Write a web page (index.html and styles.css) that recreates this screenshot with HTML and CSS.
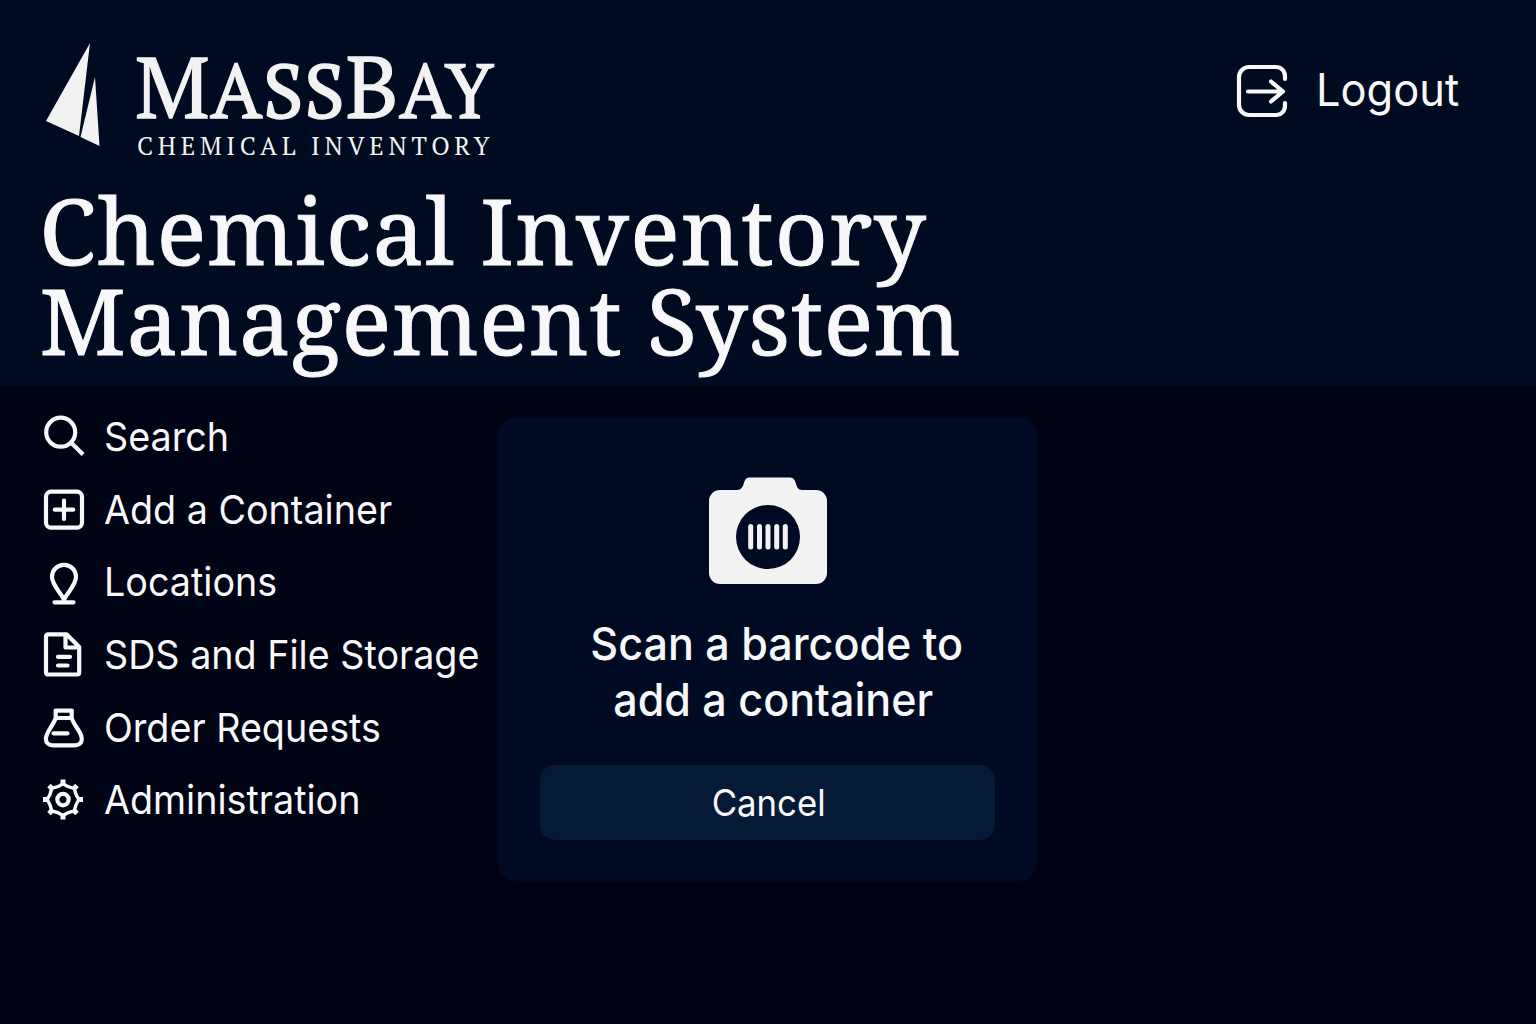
FILE: index.html
```html
<!DOCTYPE html>
<html lang="en">
<head>
<meta charset="utf-8">
<title>Chemical Inventory Management System</title>
<link rel="stylesheet" href="styles.css">
</head>
<body>
<header class="header">
  <div class="topbar">
    <div class="brand">
      <svg class="sails" viewBox="0 0 56 106"><path d="M46 1 2 79l33 15zM51 35 36.500 95l19 9z"/></svg>
      <div class="brand-text">
        <div class="wordmark"><span class="fit">M<small>ASS</small>B<small>AY</small></span></div>
        <div class="tagline"><span class="fit">CHEMICAL INVENTORY</span></div>
      </div>
    </div>
    <a class="logout">
      <svg class="line-icon logout-icon" viewBox="0 0 54 58"><path d="M50 17v-3a9 9 0 0 0-9-9H14a10 10 0 0 0-10 10v28a10 10 0 0 0 10 10h27a9 9 0 0 0 9-9v-3M13 29.500h34M36 19.500l12 10-12 10"/></svg>
      <span class="fit">Logout</span>
    </a>
  </div>
  <h1 class="title"><span class="fit line-one">Chemical Inventory</span><span class="fit line-two">Management System</span></h1>
</header>
<main class="main">
  <nav class="menu">
    <a class="item"><svg class="line-icon" viewBox="0 0 44 52"><circle cx="18.700" cy="21.200" r="14.500"/><path d="M30 32.500 41 43.500" stroke-linecap="butt"/></svg><span class="fit">Search</span></a>
    <a class="item"><svg class="line-icon" viewBox="0 0 44 52"><rect x="4" y="8.700" width="36" height="36" rx="5"/><path d="M22 17.500v18.400M12.800 26.700h18.400"/></svg><span class="fit">Add a Container</span></a>
    <a class="item"><svg class="line-icon" viewBox="0 0 44 52"><path d="M22 43.500C18 35.500 10 29 10 20.800a12 12 0 0 1 24 0C34 29 26 35.500 22 43.500ZM12.500 46.300h19"/></svg><span class="fit">Locations</span></a>
    <a class="item"><svg class="line-icon" viewBox="0 0 44 52"><path d="M6 6.300h18.500L37.200 19v25.500a2 2 0 0 1-2 2H6a2 2 0 0 1-2-2v-36.200a2 2 0 0 1 2-2ZM23.500 7v12.500H37M16 28.800h12M16 37.500h9.500"/></svg><span class="fit">SDS and File Storage</span></a>
    <a class="item"><svg class="line-icon" viewBox="0 0 44 52"><path d="M13.500 9.700h16.400M13.700 9.700V17C11 25 3.900 31 3.900 38c0 4 3 6.300 7 6.300h21.900c4 0 7-2.300 7-6.300C39.800 31 32 25 29.700 17V9.700M14 17h15.500M11.500 32.300h14"/></svg><span class="fit">Order Requests</span></a>
    <a class="item"><svg class="line-icon" viewBox="0 0 44 52"><g transform="translate(21 25.600)"><path class="ring" d="M0-15.800 Q4.900-12.400 11.200-11.200 Q12.400-4.900 15.800 0 Q12.400 4.900 11.200 11.200 Q4.900 12.400 0 15.800 Q-4.900 12.400-11.200 11.200 Q-12.400 4.900-15.800 0 Q-12.400-4.900-11.200-11.200 Q-4.900-12.400 0-15.800Z"/><circle r="5.700"/><path class="teeth" d="M0-15v-5M0 15v5M-15 0h-5M15 0h5M-11-11l-3-3M11-11l3-3M-11 11l-3 3M11 11l3 3"/></g></svg><span class="fit">Administration</span></a>
  </nav>
  <section class="card">
    <svg class="camera" viewBox="0 0 120 108">
      <path class="camera-body" d="M12 13h17c9 0 5-12.500 12-12.500h41c8 0 4 12.500 12 12.500h14a11 11 0 0 1 11 11v72a11 11 0 0 1-11 11H12a11 11 0 0 1-11-11V24a11 11 0 0 1 11-11Z"/>
      <circle class="lens" cx="60" cy="60" r="32"/>
      <path class="bars" d="M42.700 49.500v20.500M51.500 49.500v20.500M60 49.500v20.500M68.700 49.500v20.500M77.300 49.500v20.500"/>
    </svg>
    <p class="prompt"><span class="fit prompt-one">Scan a barcode to</span><span class="fit prompt-two">add a container</span></p>
    <button class="cancel"><span class="fit">Cancel</span></button>
  </section>
</main>
</body>
</html>
```
FILE: styles.css
```css
* { box-sizing: border-box; }
body {
  margin: 0;
  min-height: 1024px;
  background: #000314;
  color: #f8f8fa;
  font-family: Inter, "Liberation Sans", sans-serif;
}
.fit { display: inline-block; white-space: nowrap; transform-origin: left; }

.header { height: 386px; padding-top: 42px; background: #000a20; }
.topbar { display: flex; justify-content: space-between; height: 142.500px; padding: 0 77px 0 44px; }
.brand { display: flex; gap: 35px; }
.sails { width: 56px; height: 106px; fill: #f2f2f2; }
.brand-text { font-family: "PT Serif", "Noto Serif", "Liberation Serif", serif; color: #f2f2f2; padding-top: 4px; }
.wordmark { width: 360px; height: 84px; font-size: 86px; line-height: 80px; letter-spacing: 0.900px; -webkit-text-stroke: 1.400px; }
.wordmark small { font-size: 75.500px; }
.tagline { padding-left: 2px; font-size: 25px; line-height: 32px; letter-spacing: 4.700px; }

.logout { display: flex; gap: 27px; height: 98px; align-items: center; font-size: 45px; }
.logout-icon { width: 54px; height: 58px; }
.logout .fit { width: 143px; margin-top: -3px; transform: scaleX(0.965); }

.title {
  display: flex;
  flex-direction: column;
  align-items: flex-start;
  margin: 0;
  padding-left: 39.500px;
  font: 400 92px/90px "Noto Serif", "PT Serif", "Liberation Serif", serif;
  -webkit-text-stroke: 1px;
}
.line-one { letter-spacing: 1.200px; }
.line-two { letter-spacing: 0.700px; }

.line-icon { fill: none; stroke: currentColor; stroke-width: 4.200; stroke-linecap: round; stroke-linejoin: round; flex: none; }
.ring { stroke-width: 3.400; }
.teeth { stroke-width: 5; stroke-linecap: butt; }

.main { display: flex; align-items: flex-start; padding-left: 42px; }
.menu { width: 456px; padding-top: 14.400px; font-size: 40px; }
.item { display: flex; align-items: center; gap: 18px; height: 72.600px; }
.item .line-icon { width: 44px; height: 52px; }
.item .fit { transform: scaleX(0.942); }

.card {
  display: flex;
  flex-direction: column;
  align-items: center;
  width: 539px;
  height: 463px;
  margin-top: 32px;
  padding-top: 59px;
  border-radius: 18px;
  background: #000b23;
}
.camera { width: 120px; height: 108px; }
.camera-body { fill: #f2f2f2; }
.lens { fill: #000b23; }
.bars { fill: none; stroke: #f2f2f2; stroke-width: 5; stroke-linecap: round; }
.prompt { display: flex; flex-direction: column; align-items: center; margin: 31px 0 0; font-size: 45px; font-weight: 500; line-height: 56px; }
.prompt .fit, .cancel .fit { transform-origin: center; }
.prompt .fit { transform: scaleX(0.957); }
.prompt-one { margin-left: 18px; }
.prompt-two { margin-left: 12px; }
.cancel {
  width: 455px;
  height: 75px;
  margin-top: 37px;
  padding: 0 0 0 2px;
  border: 0;
  border-radius: 15px;
  background: #051a35;
  color: inherit;
  font: 400 37px/75px Inter, "Liberation Sans", sans-serif;
}
.cancel .fit { transform: scaleX(0.94); }
```
